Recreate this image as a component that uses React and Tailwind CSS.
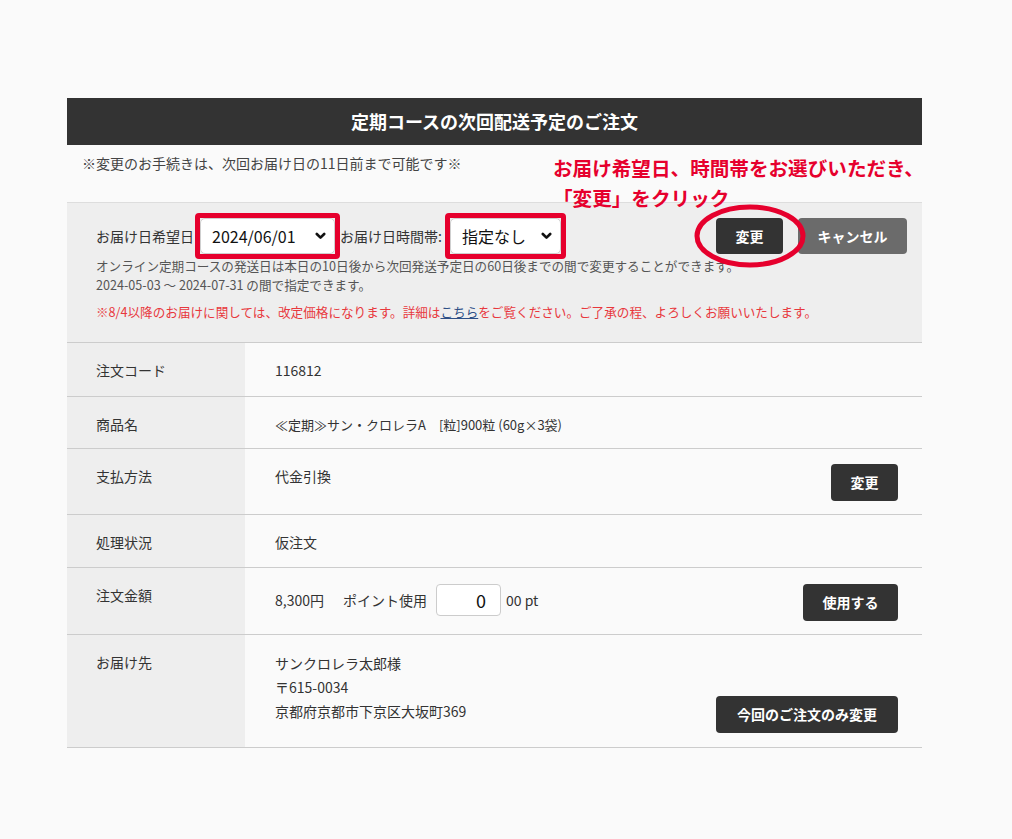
import React, { useState } from 'react';

// --- Small pieces ---

const Chevron = () => (
    <svg className="pointer-events-none absolute right-[9px] top-1/2 -translate-y-1/2" width="11" height="8" viewBox="0 0 11 8" fill="none" stroke="#111" strokeWidth="2.6" strokeLinecap="round" strokeLinejoin="round">
        <polyline points="1.8,2 5.5,5.7 9.2,2" />
    </svg>
);

// A select with a red marker frame drawn around it
const MarkedSelect = ({ value, options, width, onChange }) => (
    <div className="rounded-[4px] border-[5px] border-[#e6002d]">
        <div className={`relative ${width}`}>
            <select
                value={value}
                onChange={(e) => onChange(e.target.value)}
                className="h-[36px] w-full appearance-none rounded-[5px] border border-[#cfcfcf] bg-white pl-[11px] pr-8 text-[16px] text-[#111] outline-none"
            >
                {options.map((o) => (
                    <option key={o} value={o}>{o}</option>
                ))}
            </select>
            <Chevron />
        </div>
    </div>
);

const DarkButton = ({ children, width }) => (
    <button className={`h-[37px] ${width} shrink-0 rounded-[4px] bg-[#333] text-[14px] font-bold text-white`}>
        {children}
    </button>
);

const Row = ({ label, children, valueClass = 'pt-[17px] pb-[15px]' }) => (
    <div className="flex border-b border-[#cccccc]">
        <div className="w-[178px] shrink-0 bg-[#eeeeee] pl-[29px] pt-[17px] text-[14px] leading-[21px] text-[#333]">
            {label}
        </div>
        <div className={`flex-1 bg-[#fafafa] pl-[30px] pr-[24px] text-[14px] leading-[21px] text-[#333] ${valueClass}`}>
            {children}
        </div>
    </div>
);

// --- Main App Component ---

function App() {
    const [date, setDate] = useState('2024/06/01');
    const [slot, setSlot] = useState('指定なし');
    const [points, setPoints] = useState('0');

    return (
        <div className="min-h-screen bg-[#fafafa] pt-[98px] font-['Noto_Sans_CJK_JP','Noto_Sans',sans-serif]">
            <div className="relative ml-[67px] w-[855px]">
                {/* --- Title bar --- */}
                <h1 className="flex h-[47px] items-center justify-center bg-[#333333] text-[18px] font-bold text-white">
                    定期コースの次回配送予定のご注文
                </h1>

                {/* --- Notice --- */}
                <div className="h-[58px] border-b border-[#dddddd] bg-[#fafafa] pl-[15px] pt-[8px] text-[14px] leading-[21px] text-[#444]">
                    ※変更のお手続きは、次回お届け日の11日前まで可能です※
                </div>

                {/* --- Guide note --- */}
                <p className="pointer-events-none absolute left-[486px] top-[55px] z-10 whitespace-nowrap text-[19.6px] font-bold leading-[30px] text-[#e6002d]">
                    お届け希望日、時間帯をお選びいただき、
                    <br />
                    「変更」をクリック
                </p>

                {/* --- Delivery date form --- */}
                <div className="border-b border-[#cccccc] bg-[#eeeeee] pb-[21px] pl-[29px] pr-[15px] pt-[10px]">
                    <div className="flex items-center">
                        <span className="text-[14px] text-[#333]">お届け日希望日</span>
                        <div className="ml-px">
                            <MarkedSelect value={date} onChange={setDate} width="w-[135px]" options={['2024/06/01', '2024/06/15', '2024/07/01']} />
                        </div>
                        <span className="text-[14px] text-[#333]">お届け日時間帯:</span>
                        <div className="ml-[3px]">
                            <MarkedSelect value={slot} onChange={setSlot} width="w-[111px]" options={['指定なし', '午前中', '14-16時', '16-18時']} />
                        </div>
                        <div className="ml-auto flex gap-[15px]">
                            <div className="relative">
                                <button className="h-[36px] w-[67px] rounded-[4px] bg-[#333] text-[14px] font-bold text-white">変更</button>
                                <svg className="pointer-events-none absolute left-[-22px] top-[-14px]" width="112" height="64" viewBox="0 0 112 64" fill="none">
                                    <ellipse cx="56" cy="32" rx="53" ry="29" stroke="#e6002d" strokeWidth="5" />
                                </svg>
                            </div>
                            <button className="h-[36px] w-[109px] rounded-[4px] bg-[#6b6b6b] text-[14px] font-bold text-white">キャンセル</button>
                        </div>
                    </div>
                    <p className="mt-[-3px] text-[12.6px] leading-[19px] text-[#555]">
                        オンライン定期コースの発送日は本日の10日後から次回発送予定日の60日後までの間で変更することができます。
                    </p>
                    <p className="text-[12.6px] leading-[19px] text-[#555]">
                        2024-05-03 ～ 2024-07-31 の間で指定できます。
                    </p>
                    <p className="mt-[8px] text-[12.6px] leading-[19px] text-[#e8383d]">
                        ※8/4以降のお届けに関しては、改定価格になります。詳細は
                        <a href="#" className="text-[#2d4f86] underline">こちら</a>
                        をご覧ください。ご了承の程、よろしくお願いいたします。
                    </p>
                </div>

                {/* --- Order details --- */}
                <Row label="注文コード">116812</Row>
                <Row label="商品名" valueClass="pt-[17px] pb-[13px]">
                    <span className="text-[13px]">≪定期≫サン・クロレラA　[粒]900粒 (60g×3袋)</span>
                </Row>
                <Row label="支払方法" valueClass="pt-[15px] pb-[13px] flex items-start justify-between">
                    <span className="mt-[2px]">代金引換</span>
                    <DarkButton width="w-[67px]">変更</DarkButton>
                </Row>
                <Row label="処理状況" valueClass="pt-[17px] pb-[14px]">仮注文</Row>
                <Row label="注文金額" valueClass="pt-4 pb-[13px] flex items-start justify-between">
                    <div className="flex h-[32px] items-center">
                        <span>8,300円</span>
                        <span className="ml-[19px]">ポイント使用</span>
                        <input
                            value={points}
                            onChange={(e) => setPoints(e.target.value)}
                            className="ml-[9px] h-[32px] w-[65px] rounded-[4px] border border-[#cccccc] bg-white pr-[14px] text-right text-[18px] text-[#111] outline-none"
                        />
                        <span className="ml-[5px]">00 pt</span>
                    </div>
                    <DarkButton width="w-[95px]">使用する</DarkButton>
                </Row>
                <Row label="お届け先" valueClass="pt-4 pb-[14px] flex items-end justify-between">
                    <div className="pb-[10px] leading-[24px]">
                        <p>サンクロレラ太郎様</p>
                        <p>〒615-0034</p>
                        <p>京都府京都市下京区大坂町369</p>
                    </div>
                    <DarkButton width="w-[182px]">今回のご注文のみ変更</DarkButton>
                </Row>
            </div>
        </div>
    );
}

export default App;
